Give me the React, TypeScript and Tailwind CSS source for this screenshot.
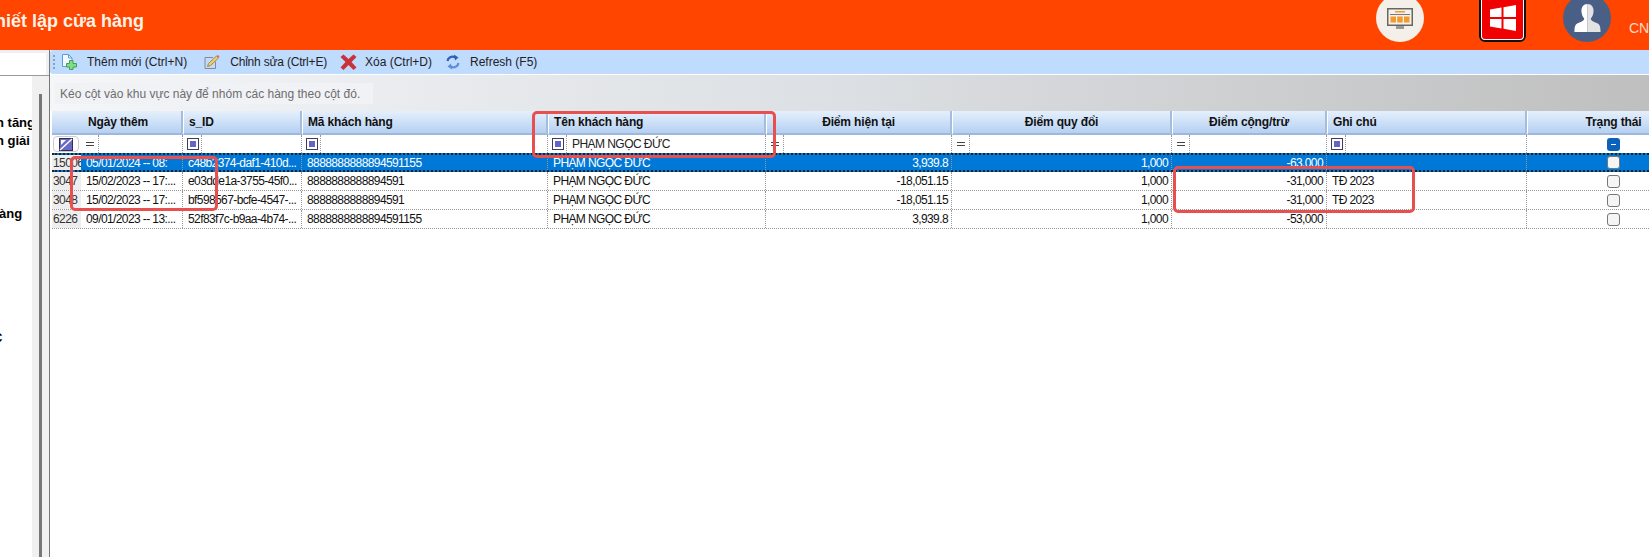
import type { ReactNode } from 'react';

// --- DATA ---
const columns = [
  { label: 'Ngày thêm', align: 'center', op: 'eq' },
  { label: 's_ID', align: 'left', op: 'box' },
  { label: 'Mã khách hàng', align: 'left', op: 'box' },
  { label: 'Tên khách hàng', align: 'left', op: 'box', value: 'PHẠM NGỌC ĐỨC' },
  { label: 'Điểm hiện tại', align: 'center', op: 'eq' },
  { label: 'Điểm quy đổi', align: 'center', op: 'eq' },
  { label: 'Điểm cộng/trừ', align: 'center', op: 'eq' },
  { label: 'Ghi chú', align: 'left', op: 'box' },
];

const rows = [
  ['15006', '05/01/2024 -- 08:', 'c48b2374-daf1-410d...', '8888888888894591155', 'PHẠM NGỌC ĐỨC', '3,939.8', '1,000', '-63,000', ''],
  ['3047', '15/02/2023 -- 17:...', 'e03dde1a-3755-45f0...', '8888888888894591', 'PHẠM NGỌC ĐỨC', '-18,051.15', '1,000', '-31,000', 'TĐ 2023'],
  ['3048', '15/02/2023 -- 17:...', 'bf598567-bcfe-4547-...', '8888888888894591', 'PHẠM NGỌC ĐỨC', '-18,051.15', '1,000', '-31,000', 'TĐ 2023'],
  ['6226', '09/01/2023 -- 13:...', '52f83f7c-b9aa-4b74-...', '8888888888894591155', 'PHẠM NGỌC ĐỨC', '3,939.8', '1,000', '-53,000', ''],
];

const gridCols = 'grid grid-cols-[29px_102px_119px_246px_218px_186px_220px_155px_200px_172px]';
const headCell = 'bg-gradient-to-b from-[#e6f0fc] to-[#b5d0f2] border-b-2 border-b-[#9db8dc] flex items-center font-bold text-[12px] tracking-[-0.15px] whitespace-nowrap';

// --- ICONS ---
const AddIcon = () => (
  <svg width="17" height="16" viewBox="0 0 17 16" fill="none">
    <path d="M1.500 .5h6l3.500 3.500v8.500h-9.500z" stroke="#5b9bd8" fill="#f4f9ff" />
    <path d="M7.500 .5v3.500h3.500" stroke="#5b9bd8" />
    <path d="M8.500 6.500h3.500v3h3.500v3.500h-3.500v2.500h-3.500v-2.500h-3v-3.500h3z" fill="#86dc86" stroke="#3fa356" />
  </svg>
);

const PencilIcon = () => (
  <svg width="16" height="16" viewBox="0 0 16 16" fill="none">
    <path d="M1 3.500h8M1 3.500v11h10.500v-7" stroke="#8a8a8a" />
    <path d="M12.500 2l2 2-8 7.500-3 1 1-3z" fill="#f0cd73" stroke="#a08a50" />
    <path d="M12.500 2l2 2 1-1.500-1.500-1.500z" fill="#d9687c" />
  </svg>
);

const DeleteIcon = () => (
  <svg width="17" height="16" viewBox="0 0 17 16">
    <path d="M.5 3L3.500 .5 8.500 5l5-4.500L16.500 3l-5 5 5 5.500-3 2.500-5-5-5 5-3-2.500 5-5.500z" fill="#c8333a" />
  </svg>
);

const RefreshIcon = () => (
  <svg width="14" height="16" viewBox="0 0 14 16" fill="none">
    <path d="M1.500 7C2 3.500 5.500 1.500 9.500 3.500" stroke="#2f62b4" strokeWidth="2.200" />
    <path d="M8 .5l4.500 3-3.500 3z" fill="#2f62b4" />
    <path d="M12.500 9C12 12.500 8.500 14.500 4.500 12.500" stroke="#5f8fd6" strokeWidth="2.200" />
    <path d="M6 15.500l-4.500-3 3.500-3z" fill="#5f8fd6" />
  </svg>
);

const MonitorIcon = () => (
  <svg width="26" height="21" viewBox="0 0 26 21">
    <rect x="0" y="0" width="26" height="18" fill="#666" />
    <rect x="1.500" y="1.500" width="23" height="15" fill="#f4f1ec" />
    <rect x="8" y="3" width="10" height="1.500" fill="#f29a2e" />
    <rect x="3" y="6" width="20" height="1" fill="#777" />
    <rect x="3.500" y="8.500" width="5.500" height="6" fill="#f29a2e" />
    <rect x="10.200" y="8.500" width="5.500" height="6" fill="#f29a2e" />
    <rect x="17" y="8.500" width="5.500" height="6" fill="#f29a2e" />
    <rect x="9" y="18" width="8" height="3" fill="#999" />
  </svg>
);

const WindowsIcon = () => (
  <svg width="26" height="26" viewBox="0 0 26 26" fill="#fff">
    <path d="M0 4.500L11.500 2.500V12H0z" />
    <path d="M13.500 2.200L26 0V12H13.500z" />
    <path d="M0 14H11.500V23.500L0 21.500z" />
    <path d="M13.500 14H26V26L13.500 23.800z" />
  </svg>
);

const PersonIcon = () => (
  <svg width="27" height="28" viewBox="0 0 28 30">
    <path d="M14 0C9.500 0 7.500 3.500 7.500 7.500 7.500 11 9 14 10.500 15.500 10.500 18 7 19 3.500 20.500 1 21.500 0 24 0 30H14z" fill="#fff" />
    <path d="M14 0C18.500 0 20.500 3.500 20.500 7.500 20.500 11 19 14 17.500 15.500 17.500 18 21 19 24.500 20.500 27 21.500 28 24 28 30H14z" fill="#e3e3e3" />
  </svg>
);

const FilterModeIcon = () => (
  <svg width="14" height="13" viewBox="0 0 14 13">
    <rect x=".5" y=".5" width="13" height="12" fill="#6a6ac4" stroke="#2f2f55" />
    <path d="M1 12L13 1" stroke="#fff" strokeWidth="1.500" />
    <path d="M2 2h5L2 7z" fill="#fff" />
  </svg>
);

const ToolButton = ({ icon, label, className }: { icon: ReactNode; label: string; className: string }) => (
  <div className={`flex items-center ${className}`}>
    {icon}
    <span className="whitespace-nowrap">{label}</span>
  </div>
);

const FilterOp = ({ type }: { type: string }) =>
  type === 'eq' ? (
    <div className="w-[18px] h-full shrink-0 flex items-center justify-center border-r border-dotted border-[#999]">
      <span className="flex flex-col gap-[2px] w-[8px]">
        <span className="h-px bg-[#444]" />
        <span className="h-px bg-[#444]" />
      </span>
    </div>
  ) : (
    <div className="w-[19px] h-full shrink-0 flex items-center pl-[4px] border-r border-dotted border-[#999]">
      <span className="w-[12px] h-[12px] border border-[#3c3c5c] p-[2px] flex">
        <span className="flex-1 bg-[#6464c8]" />
      </span>
    </div>
  );

const Checkbox = () => (
  <span className="w-[13px] h-[13px] rounded-[3px] border border-[#777] bg-[#f5f5f5] block" />
);

const Annotation = ({ className }: { className: string }) => (
  <div className={`absolute border-[3px] border-[#e8504f] rounded-[5px] ${className}`} />
);

export default function App() {
  return (
    <div className="relative w-screen h-screen overflow-hidden bg-white flex flex-col font-['Liberation_Sans',sans-serif] text-[12px] text-[#111]">
      {/* --- HEADER --- */}
      <header className="h-[50px] shrink-0 bg-[#ff4500] flex items-start overflow-hidden">
        <div className="w-[1376px] shrink-0 h-[42px] flex items-center">
          <span className="-ml-[5px] text-[18px] font-bold text-[#fff3e8] whitespace-nowrap">hiết lập cửa hàng</span>
        </div>
        <div className="w-[48px] h-[48px] -mt-[6px] rounded-full bg-[#f5efe9] shrink-0 flex items-center justify-center">
          <MonitorIcon />
        </div>
        <div className="ml-[55px] w-[47px] h-[48px] -mt-[6px] shrink-0 rounded-[6px] bg-white border-2 border-[#111] p-px flex">
          <div className="flex-1 rounded-[3px] bg-[#f00000] flex items-center justify-center">
            <WindowsIcon />
          </div>
        </div>
        <div className="ml-[37px] w-[48px] h-[48px] -mt-[6px] shrink-0 rounded-full bg-[#4a5f85] flex items-center justify-center overflow-hidden">
          <PersonIcon />
        </div>
        <span className="ml-[18px] mt-[18px] text-[14px] text-[#ffd9c4] whitespace-nowrap">CN:</span>
      </header>

      <div className="flex-1 flex min-h-0">
        {/* --- LEFT PANEL --- */}
        <aside className="w-[50px] shrink-0 flex flex-col bg-[#f0f0f0] border-r border-[#777]">
          <div className="h-[25px] shrink-0 pt-[3px] pr-[3px]">
            <div className="h-full bg-white" />
          </div>
          <div className="flex-1 flex border-t border-[#999] min-h-0">
            <div className="w-[32px] shrink-0 bg-white overflow-hidden font-bold text-[13px] leading-[18px] text-black whitespace-nowrap pt-[38px]">
              <div className="-ml-[4px]">n tăng</div>
              <div className="-ml-[4px]">n giải</div>
              <div className="mt-[55px] -ml-[1px]">àng</div>
              <div className="mt-[106px] -ml-[7px]">C</div>
            </div>
            <div className="pl-[7px] pt-[18px] flex">
              <div className="w-[3px] bg-[#777]" />
            </div>
          </div>
        </aside>

        <main className="flex-1 min-w-0 flex flex-col overflow-hidden">
          {/* --- TOOLBAR --- */}
          <div className="h-[24px] shrink-0 bg-[#bfdbfe] rounded-l-[3px] flex items-center text-[12px] text-[#222]">
            <span className="ml-[3px] h-[14px] border-l-2 border-dotted border-[#8aa0bc]" />
            <ToolButton icon={<AddIcon />} label="Thêm mới (Ctrl+N)" className="ml-[6px] gap-[9px]" />
            <ToolButton icon={<PencilIcon />} label="Chỉnh sửa (Ctrl+E)" className="ml-[17px] gap-[10px] tracking-[-0.2px]" />
            <ToolButton icon={<DeleteIcon />} label="Xóa (Ctrl+D)" className="ml-[13px] gap-[8px]" />
            <ToolButton icon={<RefreshIcon />} label="Refresh (F5)" className="ml-[14px] gap-[10px]" />
          </div>
          <div className="h-px shrink-0 bg-white" />

          {/* --- GROUP PANEL --- */}
          <div className="h-[36px] shrink-0 bg-gradient-to-r from-[#f4f6f8] via-[#dcdfe3] to-[#bfbfbf] pl-[5px] pt-[8px]">
            <div className="w-[318px] h-[21px] bg-[#f0f2f5] flex items-center pl-[5px] text-[12px] text-[#6d6d6d] whitespace-nowrap">
              Kéo cột vào khu vực này để nhóm các hàng theo cột đó.
            </div>
          </div>

          {/* --- GRID --- */}
          <div className="flex-1 pl-[2px] bg-white">
            <div className={`${gridCols} h-[24px] bg-white`}>
              <div className={`col-span-2 ${headCell} border-r-2 border-r-[#a5bddc] pl-[36px]`}>Ngày thêm</div>
              {columns.slice(1).map((col) => (
                <div
                  key={col.label}
                  className={`${headCell} border-r-2 border-r-[#a5bddc] border-l border-l-white ${
                    col.align === 'center' ? 'justify-center' : 'pl-[5px]'
                  }`}
                >
                  {col.label}
                </div>
              ))}
              <div className={`${headCell} border-l border-l-white justify-center`}>Trạng thái</div>
            </div>

            <div className={`${gridCols} h-[18px] items-stretch`}>
              <div className="p-[1px] pr-[2px]">
                <div className="h-full rounded-[4px] border border-[#ccc] flex items-center justify-center">
                  <FilterModeIcon />
                </div>
              </div>
              {columns.map((col) => (
                <div key={col.label} className="flex items-center border-r border-dotted border-[#999] overflow-hidden whitespace-nowrap">
                  <FilterOp type={col.op} />
                  {col.value && <span className="pl-[5px] text-[#222] tracking-[-0.55px]">{col.value}</span>}
                </div>
              ))}
              <div className="flex items-center justify-center">
                <span className="w-[13px] h-[13px] rounded-[3px] bg-[#0a62ba] flex items-center justify-center">
                  <span className="w-[5px] h-px bg-white" />
                </span>
              </div>
            </div>

            {rows.map((row, i) => {
              const selected = i === 0;
              return (
                <div
                  key={row[0]}
                  className={`${gridCols} h-[19px] tracking-[-0.6px] ${
                    selected ? 'bg-[#0078d7] text-white border-y-2 border-dotted border-[#222]' : 'border-b border-dotted border-[#999]'
                  }`}
                >
                  <div className="bg-[#eeeeee] text-[#333] pl-[1px] flex items-center overflow-hidden whitespace-nowrap">{row[0]}</div>
                  {row.slice(1).map((cell, c) => (
                    <div
                      key={c}
                      className={`flex items-center border-r border-dotted border-[#999] overflow-hidden whitespace-nowrap ${
                        c >= 4 && c <= 6 ? 'justify-end pr-[3px]' : 'px-[5px]'
                      }`}
                    >
                      {cell}
                    </div>
                  ))}
                  <div className="flex items-center justify-center">
                    <Checkbox />
                  </div>
                </div>
              );
            })}
          </div>
        </main>
      </div>

      {/* --- ANNOTATIONS --- */}
      <Annotation className="left-[532px] top-[111px] w-[244px] h-[47px]" />
      <Annotation className="left-[70px] top-[156px] w-[148px] h-[55px]" />
      <Annotation className="left-[1173px] top-[166px] w-[242px] h-[47px]" />
    </div>
  );
}
